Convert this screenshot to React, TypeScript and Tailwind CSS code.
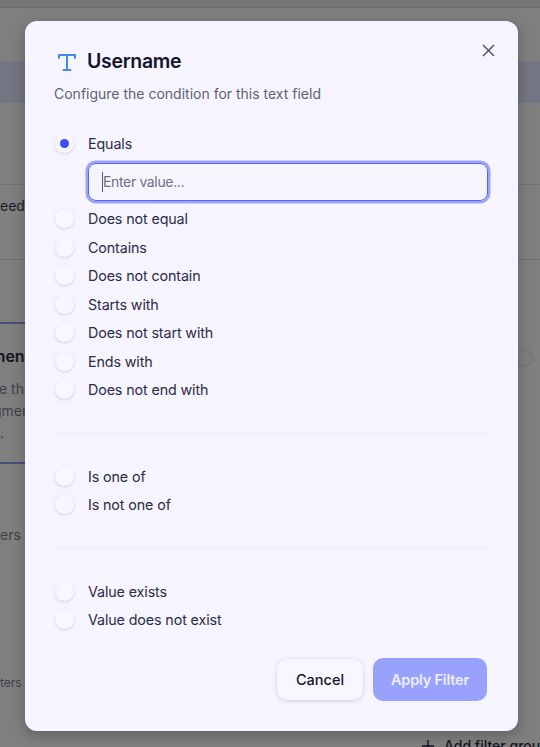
const options = ['Does not equal', 'Contains', 'Does not contain', 'Starts with', 'Does not start with', 'Ends with', 'Does not end with'];

function Radio({ label, checked }: { label: string; checked?: boolean }) {
  return (
    <label className="flex h-[28.5px] items-center gap-[14.5px] pl-[0.5px] text-[14.3px] tracking-[-0.12px] text-[#2b2b45]">
      <span className="flex h-[19px] w-[19px] items-center justify-center rounded-full bg-[#f8f7ff] shadow-[0_1px_3px_rgba(70,70,120,0.22)]">
        {checked && <span className="h-[9px] w-[9px] rounded-full bg-[#3d4ef0]" />}
      </span>
      {label}
    </label>
  );
}

export default function App() {
  return (
    <div className="relative h-[747px] w-[540px] overflow-hidden bg-[#7f7f7f] font-['Inter',sans-serif]">
      {/* dimmed page behind the dialog */}
      <div className="h-2 border-b border-[#6e6e6e] bg-[#767676]" />
      <div className="mt-[53px] h-[42px] bg-[#737583]" />
      <div className="mt-[81px] h-[75px] border-t border-[#707070] pt-[10px] text-[14px] text-[#1c1c28]">eedl</div>
      <div className="h-[63px] border-t border-[#707070]" />
      <div className="h-[142px] w-[500px] border-y-2 border-[#4c4c7c] pt-[21px] text-[14px] leading-[22px] text-[#3f3f4a]">
        <div className="-ml-[9px] mb-[11px] text-[16px] font-semibold text-[#15151f]">ment</div>
        <div className="-ml-[1px]">e th</div>
        <div className="-ml-[7px]">gmen</div>
        <div>.</div>
      </div>
      <div className="mt-[60px] h-[33px] text-[14px] text-[#3f3f4a]">ers</div>

      <div className="absolute left-[515px] top-[349px] h-[18px] w-[18px] rounded-full border-2 border-[#767676]" />
      <div className="absolute left-0 top-[674px] text-[12px] text-[#3f3f4a]">ters</div>
      <div className="absolute left-[421px] top-[735px] flex items-center gap-[9px] whitespace-nowrap text-[14px] font-medium text-[#15151f]">
        <svg width="14" height="14" viewBox="0 0 14 14" fill="none" stroke="currentColor" strokeWidth="1.4">
          <path d="M7 1v12M1 7h12" />
        </svg>
        Add filter group
      </div>

      {/* dialog */}
      <div className="absolute left-[25px] top-[21px] h-[710px] w-[493px] rounded-[12px] bg-[#f6f5ff] px-[29px] pt-[29px] shadow-[0_4px_14px_rgba(0,0,0,0.25)]">
        <button className="absolute right-[22px] top-[22px] text-[#46465c]">
          <svg width="15" height="15" viewBox="0 0 15 15" fill="none" stroke="currentColor" strokeWidth="1.4">
            <path d="M2 2l11 11M13 2L2 13" />
          </svg>
        </button>

        <div className="flex h-[24px] items-center gap-[10px]">
          <svg width="20" height="20" viewBox="0 0 20 20" fill="none" stroke="#3f8cf0" strokeWidth="2" strokeLinecap="round" strokeLinejoin="round" className="ml-[3px]">
            <path d="M2 6V3h16v3M10 3v15M6.5 18h7" />
          </svg>
          <h2 className="text-[19.5px] font-semibold tracking-[-0.3px] text-[#14142b]">Username</h2>
        </div>
        <p className="mt-[9px] text-[14px] text-[#5f5f75]">Configure the condition for this text field</p>

        <div className="mt-[25px]">
          <Radio label="Equals" checked />
          <div className="mb-[4px] ml-[34px] mt-[5px] flex h-[38px] w-[400px] items-center rounded-[8px] border-[1.5px] border-[#5468e8] pl-[13px] text-[14px] tracking-[-0.35px] text-[#6f6f85] shadow-[0_0_0_2.5px_#9aa3fb]">
            <span className="h-[20px] w-px bg-[#55556b]" />
            Enter value...
          </div>
          {options.map((o) => (
            <Radio key={o} label={o} />
          ))}
        </div>

        <div className="ml-[2px] mt-[29px] border-t border-[#ecebf7]" />
        <div className="mt-[28px]">
          <Radio label="Is one of" />
          <Radio label="Is not one of" />
        </div>

        <div className="ml-[2px] mt-[29px] border-t border-[#ecebf7]" />
        <div className="mt-[28px]">
          <Radio label="Value exists" />
          <Radio label="Value does not exist" />
        </div>

        <div className="mt-[24px] flex justify-end gap-[10px] pr-[2px]">
          <button className="h-[41px] w-[86px] self-center rounded-[10px] bg-[#f8f7ff] text-[14.5px] font-medium text-[#14142b] shadow-[0_1px_4px_rgba(70,70,120,0.22)]">
            Cancel
          </button>
          <button className="h-[43px] w-[114px] rounded-[10px] bg-[#98a1fb] text-[14.5px] font-semibold tracking-[-0.2px] text-[#eeeeff]">
            Apply Filter
          </button>
        </div>
      </div>
    </div>
  );
}
